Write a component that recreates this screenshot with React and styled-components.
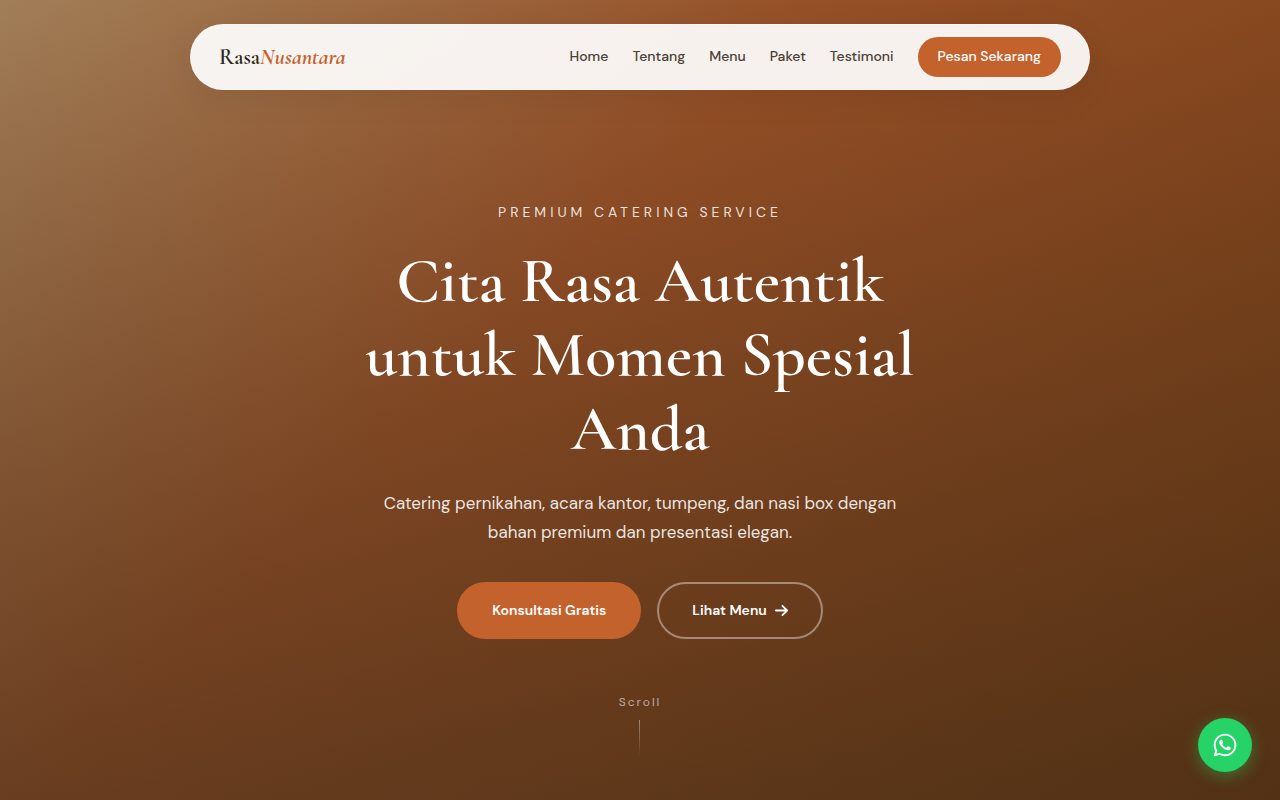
import React from 'react';
import styled, { createGlobalStyle } from 'styled-components';
import { FaWhatsapp, FaArrowRight } from 'react-icons/fa6';

const links = ['Home', 'Tentang', 'Menu', 'Paket', 'Testimoni'];

const App = () => {
  return (
    <>
      <GlobalStyle />
      <Hero>
        <Navbar>
          <Logo href="#home">Rasa<em>Nusantara</em></Logo>
          <NavLinks>
            {links.map((link) => (
              <li key={link}>
                <NavLink href={`#${link.toLowerCase()}`}>{link}</NavLink>
              </li>
            ))}
            <li>
              <NavCta href="#pesan">Pesan Sekarang</NavCta>
            </li>
          </NavLinks>
        </Navbar>

        <HeroContent>
          <Eyebrow>Premium Catering Service</Eyebrow>
          <Title>Cita Rasa Autentik untuk Momen Spesial Anda</Title>
          <Lead>
            Catering pernikahan, acara kantor, tumpeng, dan nasi box dengan bahan premium dan presentasi elegan.
          </Lead>
          <Actions>
            <Button type="button" $primary>Konsultasi Gratis</Button>
            <Button type="button">
              Lihat Menu <FaArrowRight />
            </Button>
          </Actions>
        </HeroContent>

        <ScrollHint>
          Scroll
          <ScrollLine />
        </ScrollHint>
      </Hero>
      <WhatsappLink href="#whatsapp" aria-label="WhatsApp">
        <FaWhatsapp size={26} />
      </WhatsappLink>
    </>
  );
};

export default App;


const GlobalStyle = createGlobalStyle`
  * {
    box-sizing: border-box;
    margin: 0;
    padding: 0;
  }
  body {
    font-family: "DM Sans", Inter, sans-serif;
    color: #2c2416;
  }
`

const Hero = styled.main`
  min-height: 100vh;
  display: flex;
  flex-direction: column;
  align-items: center;
  padding: 24px 24px 44px;
  background:
    linear-gradient(180deg, rgba(44, 36, 22, 0.3), rgba(44, 36, 22, 0.6)),
    linear-gradient(135deg, #d4a574 0%, #c4622d 40%, #8b4513 100%);
`

const Navbar = styled.nav`
  width: 100%;
  max-width: 900px;
  display: flex;
  align-items: center;
  justify-content: space-between;
  padding: 12px 28px;
  background: rgba(255, 255, 255, 0.92);
  border: 1px solid rgba(255, 255, 255, 0.3);
  border-radius: 50px;
  box-shadow: 0 8px 32px rgba(0, 0, 0, 0.08);
`

const Logo = styled.a`
  font-family: "Cormorant Garamond", "Liberation Serif", serif;
  font-size: 22px;
  font-weight: 600;
  color: #2c2416;
  text-decoration: none;
  em {
    font-weight: 700;
    color: #c4622d;
  }
`

const NavLinks = styled.ul`
  display: flex;
  align-items: center;
  gap: 24px;
  list-style: none;
`

const NavLink = styled.a`
  display: block;
  padding-bottom: 2px;
  font-size: 14px;
  font-weight: 500;
  line-height: 20px;
  color: #4a4035;
  text-decoration: none;
`

const NavCta = styled(NavLink)`
  padding: 9px 20px 11px;
  border-radius: 50px;
  background: #c4622d;
  color: #fff;
`

const HeroContent = styled.section`
  flex: 1;
  width: 100%;
  max-width: 600px;
  display: flex;
  flex-direction: column;
  align-items: center;
  justify-content: flex-end;
  padding: 110px 0 54px;
  text-align: center;
`

const Eyebrow = styled.p`
  font-size: 14px;
  line-height: 22px;
  letter-spacing: 4px;
  text-transform: uppercase;
  color: rgba(255, 255, 255, 0.85);
  margin-bottom: 21px;
`

const Title = styled.h1`
  font-family: "Cormorant Garamond", "Liberation Serif", serif;
  font-size: 64px;
  font-weight: 600;
  line-height: 74px;
  color: #fff;
  margin-bottom: 23px;
`

const Lead = styled.p`
  max-width: 560px;
  font-size: 17px;
  line-height: 29px;
  color: rgba(255, 255, 255, 0.88);
  margin-bottom: 35px;
`

const Actions = styled.div`
  display: flex;
  flex-wrap: wrap;
  justify-content: center;
  gap: 16px;
`

const Button = styled.button`
  display: inline-flex;
  align-items: center;
  gap: 8px;
  padding: 16px 33px;
  font-family: inherit;
  font-size: 14px;
  font-weight: 600;
  line-height: 21px;
  color: #fff;
  cursor: pointer;
  border-radius: 50px;
  border: 2px solid ${({ $primary }) => ($primary ? '#c4622d' : 'rgba(255, 255, 255, 0.4)')};
  background: ${({ $primary }) => ($primary ? '#c4622d' : 'transparent')};
  svg {
    width: 13px;
    height: 15px;
  }
`

const ScrollHint = styled.div`
  display: flex;
  flex-direction: column;
  align-items: center;
  gap: 8px;
  font-size: 12px;
  line-height: 19px;
  letter-spacing: 2px;
  color: rgba(255, 255, 255, 0.6);
`

const ScrollLine = styled.span`
  width: 1px;
  height: 36px;
  background: linear-gradient(180deg, rgba(255, 255, 255, 0.4), transparent);
`

const WhatsappLink = styled.a`
  position: fixed;
  right: 28px;
  bottom: 28px;
  width: 54px;
  height: 54px;
  display: flex;
  align-items: center;
  justify-content: center;
  border-radius: 50%;
  background: #25d366;
  color: #fff;
  box-shadow: 0 4px 16px rgba(37, 211, 102, 0.4);
`
